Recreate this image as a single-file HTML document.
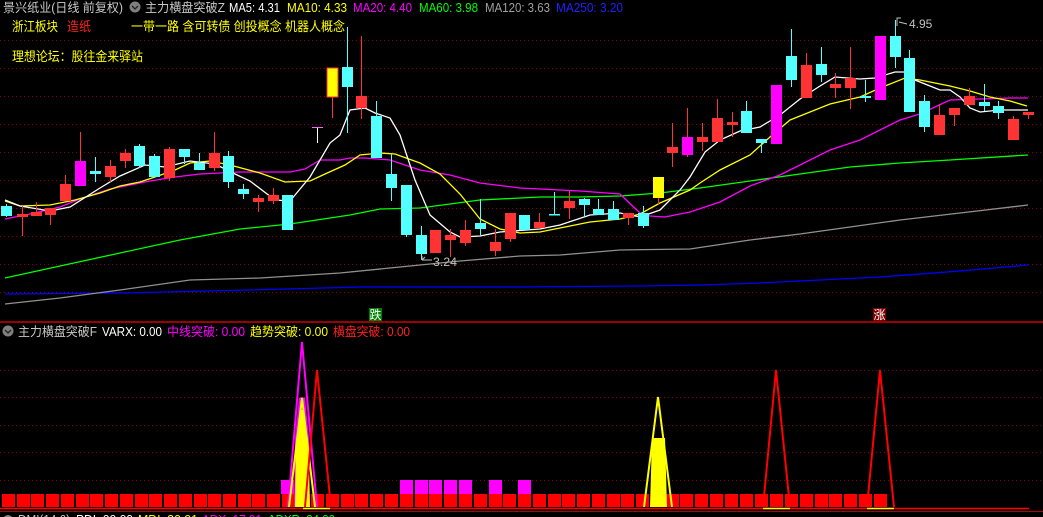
<!DOCTYPE html>
<html><head><meta charset="utf-8"><style>
html,body{margin:0;padding:0;background:#000;width:1043px;height:517px;overflow:hidden}
svg{display:block}
text{font-family:"Liberation Sans","Noto Sans CJK SC",sans-serif}
</style></head><body>
<svg width="1043" height="517" viewBox="0 0 1043 517" xmlns="http://www.w3.org/2000/svg">
<g stroke="#8a0000" stroke-width="1" stroke-dasharray="1,3">
<line x1="0" y1="40.5" x2="1043" y2="40.5"/><line x1="0" y1="68.5" x2="1043" y2="68.5"/><line x1="0" y1="96.5" x2="1043" y2="96.5"/><line x1="0" y1="124.5" x2="1043" y2="124.5"/><line x1="0" y1="152.5" x2="1043" y2="152.5"/><line x1="0" y1="180.5" x2="1043" y2="180.5"/><line x1="0" y1="208.5" x2="1043" y2="208.5"/><line x1="0" y1="236.5" x2="1043" y2="236.5"/><line x1="0" y1="264.5" x2="1043" y2="264.5"/><line x1="0" y1="292.5" x2="1043" y2="292.5"/>
<line x1="0" y1="370.5" x2="1043" y2="370.5"/><line x1="0" y1="397.5" x2="1043" y2="397.5"/><line x1="0" y1="425.5" x2="1043" y2="425.5"/><line x1="0" y1="452.5" x2="1043" y2="452.5"/><line x1="0" y1="480.5" x2="1043" y2="480.5"/>
</g>
<g fill="none" stroke-width="1.3">
<polyline stroke="#0000ff" points="5,294 120,293 250,290 360,287 520,287 640,286 700,285 760,283 820,280 880,277 960,271 1028,265"/>
<polyline stroke="#909090" points="5,304 60,298 120,290 190,280 260,278 340,273 400,267 460,261 520,256 560,255 620,250 690,249 750,240 800,234 850,227 900,220 960,213 1028,205"/>
<polyline stroke="#00ff00" points="5,278 60,266 120,253 180,240 240,229 290,224 350,215 380,209 420,208 480,200 540,197 580,197 620,196 660,193 700,188 750,181 800,174 850,167 900,163 950,160 1028,155"/>
<polyline stroke="#ff00ff" points="5,219 30,214 60,207 80,199 110,189 150,181 175,177 200,174 240,172 290,172 305,169 320,160 340,160 350,158 365,158 390,160 420,170 450,175 480,183 520,188 580,191 620,194 640,213 650,216 665,217 690,212 720,202 750,186 780,175 800,165 830,150 860,140 880,130 900,120 920,114 950,100 980,99 1010,98 1028,98"/>
<polyline stroke="#ffff00" points="5,201 20,206 50,205 75,200 100,193 120,186 140,182 155,177 175,170 190,163 210,161 230,165 260,173 285,182 310,181 325,174 345,165 360,155 380,153 395,154 420,163 440,174 460,194 480,219 500,229 520,233 540,232 560,228 590,222 620,219 640,214 660,203 690,190 700,183 720,170 750,155 770,137 790,120 805,114 830,104 860,97 880,88 905,78 920,80 950,86 970,91 990,97 1010,101 1027,106"/>
<polyline stroke="#ffffff" points="5,200 20,206 50,211 70,207 100,188 120,176 145,165 165,167 190,161 215,164 235,174 250,181 275,200 290,201 310,177 330,143 340,135 350,110 365,108 375,113 390,118 400,135 415,180 430,215 450,232 460,237 480,236 500,232 540,229 560,225 590,215 620,213 640,217 660,210 680,190 690,177 705,152 720,140 740,131 760,127 780,115 800,99 820,86 835,77 860,79 875,78 895,72 905,72 915,80 930,86 940,90 950,90 960,97 970,108 980,112 1000,110 1028,110"/>
</g>
<g stroke-width="1">
<line x1="6.5" y1="204" x2="6.5" y2="217" stroke="#54ffff"/><rect x="1" y="206" width="11" height="10" fill="#54ffff"/>
<line x1="22.5" y1="206" x2="22.5" y2="236" stroke="#ff3333"/><rect x="17" y="214" width="11" height="3" fill="#ff3333"/>
<line x1="36.5" y1="202" x2="36.5" y2="216" stroke="#ff3333"/><rect x="31" y="212" width="11" height="4" fill="#ff3333"/>
<line x1="50.5" y1="208" x2="50.5" y2="225" stroke="#ff3333"/><rect x="45" y="208" width="11" height="7" fill="#ff3333"/>
<line x1="65.5" y1="175" x2="65.5" y2="201" stroke="#ff3333"/><rect x="60" y="184" width="11" height="17" fill="#ff3333"/>
<line x1="80.5" y1="132" x2="80.5" y2="186" stroke="#ff3333"/><rect x="75" y="161" width="11" height="25" fill="#ff00ff"/>
<line x1="95.5" y1="157" x2="95.5" y2="182" stroke="#54ffff"/><rect x="90" y="171" width="11" height="3" fill="#54ffff"/>
<line x1="110.5" y1="160" x2="110.5" y2="182" stroke="#ff3333"/><rect x="105" y="166" width="11" height="11" fill="#ff3333"/>
<line x1="125.5" y1="149" x2="125.5" y2="168" stroke="#ff3333"/><rect x="120" y="153" width="11" height="8" fill="#ff3333"/>
<line x1="139.5" y1="144" x2="139.5" y2="168" stroke="#54ffff"/><rect x="134" y="146" width="11" height="20" fill="#54ffff"/>
<line x1="154.5" y1="154" x2="154.5" y2="177" stroke="#54ffff"/><rect x="149" y="156" width="11" height="21" fill="#54ffff"/>
<line x1="169.5" y1="147" x2="169.5" y2="181" stroke="#ff3333"/><rect x="164" y="149" width="11" height="29" fill="#ff3333"/>
<line x1="184.5" y1="149" x2="184.5" y2="164" stroke="#54ffff"/><rect x="179" y="149" width="11" height="8" fill="#54ffff"/>
<line x1="199.5" y1="153" x2="199.5" y2="170" stroke="#54ffff"/><rect x="194" y="163" width="11" height="7" fill="#54ffff"/>
<line x1="214.5" y1="132" x2="214.5" y2="171" stroke="#ff3333"/><rect x="209" y="153" width="11" height="15" fill="#ff3333"/>
<line x1="228.5" y1="151" x2="228.5" y2="188" stroke="#54ffff"/><rect x="223" y="156" width="11" height="26" fill="#54ffff"/>
<line x1="243.5" y1="184" x2="243.5" y2="199" stroke="#54ffff"/><rect x="238" y="189" width="11" height="5" fill="#54ffff"/>
<line x1="258.5" y1="195" x2="258.5" y2="212" stroke="#ff3333"/><rect x="253" y="198" width="11" height="4" fill="#ff3333"/>
<line x1="273.5" y1="188" x2="273.5" y2="204" stroke="#ff3333"/><rect x="268" y="195" width="11" height="6" fill="#ff3333"/>
<rect x="282" y="195" width="11" height="35" fill="#54ffff"/>
<line x1="317.5" y1="127" x2="317.5" y2="143" stroke="#ffffff"/><rect x="312" y="127" width="11" height="1" fill="#ff66ff"/>
<line x1="332.5" y1="68" x2="332.5" y2="118" stroke="#ff3333"/><rect x="327" y="68" width="11" height="29" fill="#ffff00" stroke="#ff3333"/>
<line x1="347.5" y1="27" x2="347.5" y2="133" stroke="#54ffff"/><rect x="342" y="67" width="11" height="20" fill="#54ffff"/>
<line x1="361.5" y1="36" x2="361.5" y2="119" stroke="#ff3333"/><rect x="356" y="96" width="11" height="12" fill="#ff3333"/>
<line x1="376.5" y1="101" x2="376.5" y2="158" stroke="#54ffff"/><rect x="371" y="116" width="11" height="42" fill="#54ffff"/>
<line x1="391.5" y1="154" x2="391.5" y2="201" stroke="#54ffff"/><rect x="386" y="174" width="11" height="14" fill="#54ffff"/>
<line x1="406.5" y1="185" x2="406.5" y2="237" stroke="#54ffff"/><rect x="401" y="185" width="11" height="50" fill="#54ffff"/>
<line x1="421.5" y1="226" x2="421.5" y2="260" stroke="#54ffff"/><rect x="416" y="235" width="11" height="19" fill="#54ffff"/>
<rect x="430" y="230" width="11" height="23" fill="#ff3333"/>
<line x1="450.5" y1="229" x2="450.5" y2="257" stroke="#ff3333"/><rect x="445" y="235" width="11" height="5" fill="#ff3333"/>
<line x1="465.5" y1="220" x2="465.5" y2="246" stroke="#ff3333"/><rect x="460" y="230" width="11" height="13" fill="#ff3333"/>
<line x1="480.5" y1="199" x2="480.5" y2="236" stroke="#54ffff"/><rect x="475" y="223" width="11" height="6" fill="#54ffff"/>
<line x1="495.5" y1="229" x2="495.5" y2="256" stroke="#ff3333"/><rect x="490" y="242" width="11" height="9" fill="#ff3333"/>
<line x1="510.5" y1="213" x2="510.5" y2="242" stroke="#ff3333"/><rect x="505" y="213" width="11" height="26" fill="#ff3333"/>
<rect x="519" y="215" width="11" height="15" fill="#54ffff"/>
<line x1="539.5" y1="213" x2="539.5" y2="228" stroke="#ff3333"/><rect x="534" y="222" width="11" height="6" fill="#ff3333"/>
<line x1="554.5" y1="192" x2="554.5" y2="215" stroke="#54ffff"/><rect x="549" y="214" width="11" height="1.5" fill="#54ffff"/>
<line x1="569.5" y1="191" x2="569.5" y2="219" stroke="#ff3333"/><rect x="564" y="201" width="11" height="7" fill="#ff3333"/>
<line x1="584.5" y1="198" x2="584.5" y2="217" stroke="#54ffff"/><rect x="579" y="199" width="11" height="6" fill="#54ffff"/>
<line x1="598.5" y1="199" x2="598.5" y2="215" stroke="#54ffff"/><rect x="593" y="209" width="11" height="6" fill="#54ffff"/>
<line x1="613.5" y1="201" x2="613.5" y2="220" stroke="#54ffff"/><rect x="608" y="209" width="11" height="11" fill="#54ffff"/>
<line x1="628.5" y1="213" x2="628.5" y2="225" stroke="#ff3333"/><rect x="623" y="213" width="11" height="5" fill="#ff3333"/>
<line x1="643.5" y1="206" x2="643.5" y2="228" stroke="#54ffff"/><rect x="638" y="213" width="11" height="13" fill="#54ffff"/>
<line x1="658.5" y1="177" x2="658.5" y2="205" stroke="#ff3333"/><rect x="653" y="177" width="11" height="21" fill="#ffff00"/>
<line x1="672.5" y1="123" x2="672.5" y2="167" stroke="#ff3333"/><rect x="667" y="147" width="11" height="6" fill="#ff3333"/>
<line x1="687.5" y1="108" x2="687.5" y2="157" stroke="#ff3333"/><rect x="682" y="137" width="11" height="18" fill="#ff00ff"/>
<line x1="702.5" y1="123" x2="702.5" y2="151" stroke="#ff3333"/><rect x="697" y="137" width="11" height="5" fill="#ff3333"/>
<line x1="717.5" y1="99" x2="717.5" y2="142" stroke="#ff3333"/><rect x="712" y="118" width="11" height="24" fill="#ff3333"/>
<line x1="732.5" y1="112" x2="732.5" y2="137" stroke="#ff3333"/><rect x="727" y="122" width="11" height="3" fill="#ff3333"/>
<line x1="746.5" y1="101" x2="746.5" y2="133" stroke="#54ffff"/><rect x="741" y="111" width="11" height="22" fill="#54ffff"/>
<line x1="761.5" y1="139" x2="761.5" y2="153" stroke="#54ffff"/><rect x="756" y="139" width="11" height="4" fill="#54ffff"/>
<rect x="771" y="85" width="11" height="59" fill="#ff00ff"/>
<line x1="791.5" y1="29" x2="791.5" y2="87" stroke="#54ffff"/><rect x="786" y="56" width="11" height="24" fill="#54ffff"/>
<line x1="806.5" y1="53" x2="806.5" y2="98" stroke="#ff3333"/><rect x="801" y="65" width="11" height="33" fill="#ff3333"/>
<line x1="821.5" y1="47" x2="821.5" y2="82" stroke="#54ffff"/><rect x="816" y="64" width="11" height="11" fill="#54ffff"/>
<line x1="835.5" y1="73" x2="835.5" y2="98" stroke="#ff3333"/><rect x="830" y="84" width="11" height="4" fill="#ff3333"/>
<line x1="850.5" y1="47" x2="850.5" y2="109" stroke="#ff3333"/><rect x="845" y="78" width="11" height="10" fill="#ff3333"/>
<line x1="865.5" y1="80" x2="865.5" y2="102" stroke="#54ffff"/><rect x="860" y="96" width="11" height="2" fill="#54ffff"/>
<rect x="875" y="36" width="11" height="64" fill="#ff00ff"/>
<line x1="895.5" y1="20" x2="895.5" y2="68" stroke="#54ffff"/><rect x="890" y="36" width="11" height="21" fill="#54ffff"/>
<line x1="909.5" y1="50" x2="909.5" y2="112" stroke="#54ffff"/><rect x="904" y="58" width="11" height="54" fill="#54ffff"/>
<line x1="924.5" y1="95" x2="924.5" y2="132" stroke="#54ffff"/><rect x="919" y="101" width="11" height="26" fill="#54ffff"/>
<line x1="939.5" y1="104" x2="939.5" y2="135" stroke="#ff3333"/><rect x="934" y="115" width="11" height="20" fill="#ff3333"/>
<line x1="954.5" y1="108" x2="954.5" y2="126" stroke="#ff3333"/><rect x="949" y="108" width="11" height="7" fill="#ff3333"/>
<line x1="969.5" y1="88" x2="969.5" y2="105" stroke="#ff3333"/><rect x="964" y="96" width="11" height="9" fill="#ff3333"/>
<line x1="984.5" y1="84" x2="984.5" y2="111" stroke="#54ffff"/><rect x="979" y="102" width="11" height="4" fill="#54ffff"/>
<line x1="998.5" y1="101" x2="998.5" y2="119" stroke="#54ffff"/><rect x="993" y="106" width="11" height="7" fill="#54ffff"/>
<line x1="1013.5" y1="116" x2="1013.5" y2="140" stroke="#ff3333"/><rect x="1008" y="119" width="11" height="21" fill="#ff3333"/>
<line x1="1028.5" y1="112" x2="1028.5" y2="119" stroke="#ff3333"/><rect x="1023" y="112" width="11" height="3" fill="#ff3333"/>
</g>
<g stroke="#c0c0c0" fill="none"><path d="M422 256 V260 M422 260 H432 M422 260 L425 257"/></g>
<text x="433" y="266" font-size="12" fill="#c0c0c0" textLength="24" lengthAdjust="spacingAndGlyphs">3.24</text>
<path d="M897 26 V18 H901" stroke="#c0c0c0" fill="none"/><line x1="899" y1="22" x2="907" y2="24" stroke="#c0c0c0"/>
<text x="909" y="28" font-size="12" fill="#c0c0c0">4.95</text>
<rect x="369" y="308" width="13" height="13" fill="#008000"/>
<text x="375.5" y="319" font-size="12" fill="#fff" text-anchor="middle">跌</text>
<rect x="873" y="308" width="13" height="13" fill="#800000"/>
<text x="879.5" y="319" font-size="12" fill="#fff" text-anchor="middle">涨</text>
<line x1="0" y1="322" x2="1043" y2="322" stroke="#cc0000" stroke-width="1.5"/>
<text x="3" y="12" font-size="12.5" fill="#c8c8c8" textLength="120" lengthAdjust="spacingAndGlyphs">景兴纸业(日线 前复权)</text>
<text x="145" y="12" font-size="12.5" fill="#c8c8c8" textLength="80" lengthAdjust="spacingAndGlyphs">主力横盘突破Z</text>
<text x="229" y="12" font-size="12.5" fill="#fff" textLength="51" lengthAdjust="spacingAndGlyphs">MA5: 4.31</text>
<text x="287" y="12" font-size="12.5" fill="#ffff00" textLength="60" lengthAdjust="spacingAndGlyphs">MA10: 4.33</text>
<text x="353" y="12" font-size="12.5" fill="#ff00ff" textLength="59" lengthAdjust="spacingAndGlyphs">MA20: 4.40</text>
<text x="419" y="12" font-size="12.5" fill="#00ff00" textLength="59" lengthAdjust="spacingAndGlyphs">MA60: 3.98</text>
<text x="485" y="12" font-size="12.5" fill="#a0a0a0" textLength="65" lengthAdjust="spacingAndGlyphs">MA120: 3.63</text>
<text x="556" y="12" font-size="12.5" fill="#2020ff" textLength="67" lengthAdjust="spacingAndGlyphs">MA250: 3.20</text>
<circle cx="135" cy="7" r="5.5" fill="#808080"/><path d="M132 6 L135 9 L138 6" stroke="#222" fill="none" stroke-width="1.3"/>
<text x="12" y="31" font-size="13" fill="#ffff00" textLength="46" lengthAdjust="spacingAndGlyphs">浙江板块</text>
<text x="67" y="31" font-size="13" fill="#ff2020" textLength="24" lengthAdjust="spacingAndGlyphs">造纸</text>
<text x="131" y="31" font-size="13" fill="#ffff00" textLength="214" lengthAdjust="spacingAndGlyphs">一带一路 含可转债 创投概念 机器人概念</text>
<text x="12" y="61" font-size="13" fill="#ffff00" textLength="131" lengthAdjust="spacingAndGlyphs">理想论坛：股往金来驿站</text>
<circle cx="8" cy="331" r="5.5" fill="#808080"/><path d="M5 330 L8 333 L11 330" stroke="#222" fill="none" stroke-width="1.3"/>
<text x="18" y="336" font-size="12.5" fill="#c8c8c8" textLength="79" lengthAdjust="spacingAndGlyphs">主力横盘突破F</text>
<text x="102" y="336" font-size="12.5" fill="#fff" textLength="60" lengthAdjust="spacingAndGlyphs">VARX: 0.00</text>
<text x="167" y="336" font-size="12.5" fill="#ff00ff" textLength="78" lengthAdjust="spacingAndGlyphs">中线突破: 0.00</text>
<text x="250" y="336" font-size="12.5" fill="#ffff00" textLength="78" lengthAdjust="spacingAndGlyphs">趋势突破: 0.00</text>
<text x="333" y="336" font-size="12.5" fill="#ff2020" textLength="77" lengthAdjust="spacingAndGlyphs">横盘突破: 0.00</text>
<g fill="#ff0000">
<rect x="2" y="494" width="13" height="13"/><rect x="17" y="494" width="13" height="13"/><rect x="31" y="494" width="13" height="13"/><rect x="46" y="494" width="13" height="13"/><rect x="61" y="494" width="13" height="13"/><rect x="76" y="494" width="13" height="13"/><rect x="90" y="494" width="13" height="13"/><rect x="105" y="494" width="13" height="13"/><rect x="120" y="494" width="13" height="13"/><rect x="135" y="494" width="13" height="13"/><rect x="149" y="494" width="13" height="13"/><rect x="164" y="494" width="13" height="13"/><rect x="179" y="494" width="13" height="13"/><rect x="194" y="494" width="13" height="13"/><rect x="208" y="494" width="13" height="13"/><rect x="223" y="494" width="13" height="13"/><rect x="238" y="494" width="13" height="13"/><rect x="252" y="494" width="13" height="13"/><rect x="267" y="494" width="13" height="13"/><rect x="282" y="494" width="13" height="13"/><rect x="297" y="494" width="13" height="13"/><rect x="311" y="494" width="13" height="13"/><rect x="326" y="494" width="13" height="13"/><rect x="341" y="494" width="13" height="13"/><rect x="355" y="494" width="13" height="13"/><rect x="370" y="494" width="13" height="13"/><rect x="385" y="494" width="13" height="13"/><rect x="400" y="494" width="13" height="13"/><rect x="415" y="494" width="13" height="13"/><rect x="429" y="494" width="13" height="13"/><rect x="444" y="494" width="13" height="13"/><rect x="459" y="494" width="13" height="13"/><rect x="474" y="494" width="13" height="13"/><rect x="489" y="494" width="13" height="13"/><rect x="503" y="494" width="13" height="13"/><rect x="518" y="494" width="13" height="13"/><rect x="533" y="494" width="13" height="13"/><rect x="548" y="494" width="13" height="13"/><rect x="562" y="494" width="13" height="13"/><rect x="577" y="494" width="13" height="13"/><rect x="592" y="494" width="13" height="13"/><rect x="607" y="494" width="13" height="13"/><rect x="621" y="494" width="13" height="13"/><rect x="636" y="494" width="13" height="13"/><rect x="651" y="494" width="13" height="13"/><rect x="666" y="494" width="13" height="13"/><rect x="680" y="494" width="13" height="13"/><rect x="695" y="494" width="13" height="13"/><rect x="710" y="494" width="13" height="13"/><rect x="725" y="494" width="13" height="13"/><rect x="740" y="494" width="13" height="13"/><rect x="755" y="494" width="13" height="13"/><rect x="770" y="494" width="13" height="13"/><rect x="785" y="494" width="13" height="13"/><rect x="800" y="494" width="13" height="13"/><rect x="815" y="494" width="13" height="13"/><rect x="829" y="494" width="13" height="13"/><rect x="844" y="494" width="13" height="13"/><rect x="859" y="494" width="13" height="13"/><rect x="874" y="494" width="13" height="13"/>
</g>
<g fill="#ff00ff">
<rect x="281" y="480" width="13" height="14"/><rect x="400" y="480" width="13" height="14"/><rect x="415" y="480" width="13" height="14"/><rect x="429" y="480" width="13" height="14"/><rect x="444" y="480" width="13" height="14"/><rect x="459" y="480" width="13" height="14"/><rect x="489" y="480" width="13" height="14"/><rect x="518" y="480" width="13" height="14"/>
</g>
<polygon points="295,438 299,398 302,397 305,398 309,438 310,507 294,507" fill="#ff00ff"/>
<polygon points="296,440 301,410 303,410 308,440 310,507 295,507" fill="#ffff00"/>
<polyline points="288,507 302,342 317,507" fill="none" stroke="#ff00ff" stroke-width="2"/>
<polyline points="289,507 302,398 315,507" fill="none" stroke="#ffff00" stroke-width="2"/>
<polyline points="305,507 317,370 331,507" fill="none" stroke="#ff0000" stroke-width="2"/>
<polygon points="652,438 665,438 667,507 650,507" fill="#ffff00"/>
<polyline points="644,507 658,397 672,507" fill="none" stroke="#ffff00" stroke-width="2"/>
<polyline points="763,507 776,370 790,507" fill="none" stroke="#ff0000" stroke-width="2"/>
<polyline points="867,507 880,370 894,507" fill="none" stroke="#ff0000" stroke-width="2"/>
<line x1="0" y1="508.5" x2="1029" y2="508.5" stroke="#ff0000" stroke-width="1.5"/>
<line x1="303" y1="508.5" x2="330" y2="508.5" stroke="#ffff00" stroke-width="1.5"/>
<line x1="763" y1="508.5" x2="790" y2="508.5" stroke="#ffff00" stroke-width="1.5"/>
<line x1="867" y1="508.5" x2="894" y2="508.5" stroke="#ffff00" stroke-width="1.5"/>
<line x1="0" y1="511.5" x2="1043" y2="511.5" stroke="#b00000" stroke-width="1"/>
<circle cx="8" cy="520" r="5" fill="#808080"/>
<text x="18" y="524" font-size="12.5" fill="#c8c8c8" textLength="52" lengthAdjust="spacingAndGlyphs">DMI(14,6)</text>
<text x="76" y="524" font-size="12.5" fill="#fff" textLength="57" lengthAdjust="spacingAndGlyphs">PDI: 00.00</text>
<text x="138" y="524" font-size="12.5" fill="#ffff00" textLength="60" lengthAdjust="spacingAndGlyphs">MDI: 30.91</text>
<text x="202" y="524" font-size="12.5" fill="#ff00ff" textLength="60" lengthAdjust="spacingAndGlyphs">ADX: 17.91</text>
<text x="268" y="524" font-size="12.5" fill="#00ff00" textLength="67" lengthAdjust="spacingAndGlyphs">ADXR: 24.00</text>
</svg>
</body></html>
